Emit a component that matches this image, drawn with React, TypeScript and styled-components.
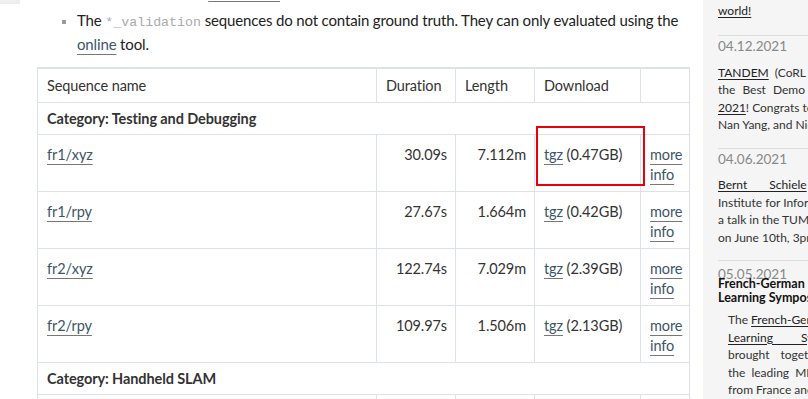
import React from "react";
import styled, { createGlobalStyle } from "styled-components";

const GlobalStyle = createGlobalStyle`
  html, body {
    margin: 0;
    padding: 0;
    background: #fff;
    overflow: hidden;
  }
  body {
    font-family: Lato, "Liberation Sans", sans-serif;
    color: #333;
  }
`;

const Page = styled.div`
  display: grid;
  grid-template-columns: 20px 683px 240px;
  width: 808px;
  height: 399px;
  overflow: hidden;
`;

const EdgeStrip = styled.div``;

const EdgeTab = styled.div`
  height: 4px;
  background: #eeeeee;
`;

const Main = styled.main`
  padding: 0 14px 0 17px;
`;

const BulletList = styled.ul`
  margin: -21px 0 0;
  padding-left: 40px;
  list-style-type: square;
  font-size: 15px;
  letter-spacing: -0.15px;
  line-height: 24px;
  color: #222;

  li::marker {
    color: #9a9a9a;
    font-size: 12px;
  }
`;

const ListItem = styled.li<{ $gap?: number }>`
  margin-top: ${(p) => p.$gap ?? 0}px;
`;

const Code = styled.code`
  font-family: "Liberation Mono", monospace;
  font-size: 13.3px;
  letter-spacing: 0;
  line-height: 0;
  color: #aaaaaa;
`;

const TextLink = styled.a`
  color: #3c5568;
  text-decoration: underline;
  text-decoration-color: #777;
  text-underline-offset: 4px;
  text-decoration-thickness: 1px;
`;

const TableWrap = styled.div`
  position: relative;
  margin-top: 11px;
`;

const Table = styled.table`
  border-collapse: collapse;
  table-layout: fixed;
  width: 652px;
  font-size: 14.5px;
  letter-spacing: -0.1px;
  line-height: 20px;
  color: #333;
  border-top: 2px solid #dde2ea;
`;

const Col = styled.col<{ $w: number }>`
  width: ${(p) => p.$w}px;
`;

const HeadCell = styled.th`
  border: 1px solid #dde2ea;
  padding: 7px 9px 6px;
  height: 20px;
  text-align: left;
  font-weight: normal;
  vertical-align: top;
`;

const CategoryCell = styled.td`
  border: 1px solid #dde2ea;
  padding: 6px 9px 5px;
  height: 20px;
  font-weight: bold;
  vertical-align: top;
`;

const Cell = styled.td<{ $num?: boolean }>`
  border: 1px solid #dde2ea;
  padding: 10px ${(p) => (p.$num ? "8px" : "9px")} 6px 9px;
  height: 40px;
  vertical-align: top;
  white-space: ${(p) => (p.$num ? "nowrap" : "normal")};
  text-align: ${(p) => (p.$num ? "right" : "left")};
`;

const Nowrap = styled.span`
  white-space: nowrap;
`;

const Highlight = styled.div`
  position: absolute;
  left: 499px;
  top: 59px;
  width: 105px;
  height: 56px;
  border: 2px solid #e8000b;
  pointer-events: none;
`;

const Sidebar = styled.aside`
  background: #f5f5f5;
  padding: 0 15px;
  font-size: 12px;
  line-height: 17.5px;
  color: #333;
`;

const Lead = styled.div`
  margin-top: -16px;
  padding-bottom: 16px;
`;

const NewsItem = styled.section`
  border-top: 1px solid #dddddd;
  padding: 2px 0 14px;
`;

const NewsDate = styled.div<{ $compact?: boolean }>`
  color: #888;
  font-size: 13.5px;
  line-height: ${(p) => (p.$compact ? "6px" : "17.5px")};
  margin-bottom: ${(p) => (p.$compact ? "0" : "8px")};
  ${(p) => (p.$compact ? "padding-top: 8px;" : "")}
`;

const NewsTitle = styled.h3`
  margin: 0 0 6px;
  font-size: 12.5px;
  line-height: 14px;
  font-weight: bold;
  color: #111;
`;

const NewsText = styled.div<{ $indent?: boolean }>`
  ${(p) => (p.$indent ? "padding-left: 10px;" : "")}
`;

// justified lines in the sidebar: the spread is fixed per line so the cut-off part matches
const Line = styled.span<{ $spread?: number }>`
  display: block;
  white-space: nowrap;
  word-spacing: ${(p) => p.$spread ?? 0}px;
`;

const NewsLink = styled.a`
  color: #222;
  text-decoration: underline;
  text-underline-offset: 2px;
`;

interface Sequence {
  name: string;
  duration: string;
  length: string;
  size: string;
}

const testing: Sequence[] = [
  { name: "fr1/xyz", duration: "30.09s", length: "7.112m", size: "0.47GB" },
  { name: "fr1/rpy", duration: "27.67s", length: "1.664m", size: "0.42GB" },
  { name: "fr2/xyz", duration: "122.74s", length: "7.029m", size: "2.39GB" },
  { name: "fr2/rpy", duration: "109.97s", length: "1.506m", size: "2.13GB" },
];

const SequenceRow = ({ seq }: { seq: Sequence }) => (
  <tr>
    <Cell>
      <TextLink href="#">{seq.name}</TextLink>
    </Cell>
    <Cell $num>{seq.duration}</Cell>
    <Cell $num>{seq.length}</Cell>
    <Cell>
      <Nowrap>
        <TextLink href="#">tgz</TextLink> ({seq.size})
      </Nowrap>
    </Cell>
    <Cell>
      <TextLink href="#">more info</TextLink>
    </Cell>
  </tr>
);

export default function App() {
  return (
    <>
      <GlobalStyle />
      <Page>
        <EdgeStrip>
          <EdgeTab />
        </EdgeStrip>
        <Main>
          <BulletList>
            <ListItem>
              We recommend the <TextLink href="#">benchmark</TextLink> tool for comparing trajectories.
            </ListItem>
            <ListItem $gap={5}>
              The <Code>*_validation</Code> sequences do not contain ground truth. They can only evaluated using
              the <TextLink href="#">online</TextLink> tool.
            </ListItem>
          </BulletList>
          <TableWrap>
            <Table>
              <colgroup>
                <Col $w={339} />
                <Col $w={79} />
                <Col $w={79} />
                <Col $w={106} />
                <Col $w={49} />
              </colgroup>
              <thead>
                <tr>
                  <HeadCell>Sequence name</HeadCell>
                  <HeadCell>Duration</HeadCell>
                  <HeadCell>Length</HeadCell>
                  <HeadCell>Download</HeadCell>
                  <HeadCell />
                </tr>
              </thead>
              <tbody>
                <tr>
                  <CategoryCell colSpan={5}>Category: Testing and Debugging</CategoryCell>
                </tr>
                {testing.map((seq) => (
                  <SequenceRow key={seq.name} seq={seq} />
                ))}
                <tr>
                  <CategoryCell colSpan={5}>Category: Handheld SLAM</CategoryCell>
                </tr>
                <SequenceRow seq={{ name: "fr1/360", duration: "28.69s", length: "5.818m", size: "0.47GB" }} />
              </tbody>
            </Table>
            <Highlight />
          </TableWrap>
        </Main>
        <Sidebar>
          <Lead>
            <Line>our dataset is now used throughout the</Line>
            <Line>
              <NewsLink href="#">world!</NewsLink>
            </Line>
          </Lead>
          <NewsItem>
            <NewsDate>04.12.2021</NewsDate>
            <NewsText>
              <Line $spread={3}>
                <NewsLink href="#">TANDEM</NewsLink> (CoRL 2021) has won
              </Line>
              <Line $spread={4}>the Best Demo Award at CoRL</Line>
              <Line>
                <NewsLink href="#">2021</NewsLink>! Congrats to Lukas Koestler,
              </Line>
              <Line>Nan Yang, and Niclas Zeller!</Line>
            </NewsText>
          </NewsItem>
          <NewsItem>
            <NewsDate>04.06.2021</NewsDate>
            <NewsText>
              <Line $spread={19}>
                <NewsLink href="#">Bernt Schiele</NewsLink> (Max Planck
              </Line>
              <Line>Institute for Informatics) will give</Line>
              <Line>a talk in the TUM AI Lecture Series</Line>
              <Line>on June 10th, 3pm CEST.</Line>
            </NewsText>
          </NewsItem>
          <NewsItem>
            <NewsDate $compact>05.05.2021</NewsDate>
            <NewsTitle>
              French-German Machine
              <br />
              Learning Symposium
            </NewsTitle>
            <NewsText $indent>
              <Line>
                The <NewsLink href="#">French-German Machine</NewsLink>
              </Line>
              <Line $spread={25}>
                <NewsLink href="#">Learning Symposium</NewsLink> has
              </Line>
              <Line $spread={8}>brought together some of the</Line>
              <Line $spread={3}>the leading ML researchers</Line>
              <Line>from France and Germany.</Line>
            </NewsText>
          </NewsItem>
        </Sidebar>
      </Page>
    </>
  );
}
